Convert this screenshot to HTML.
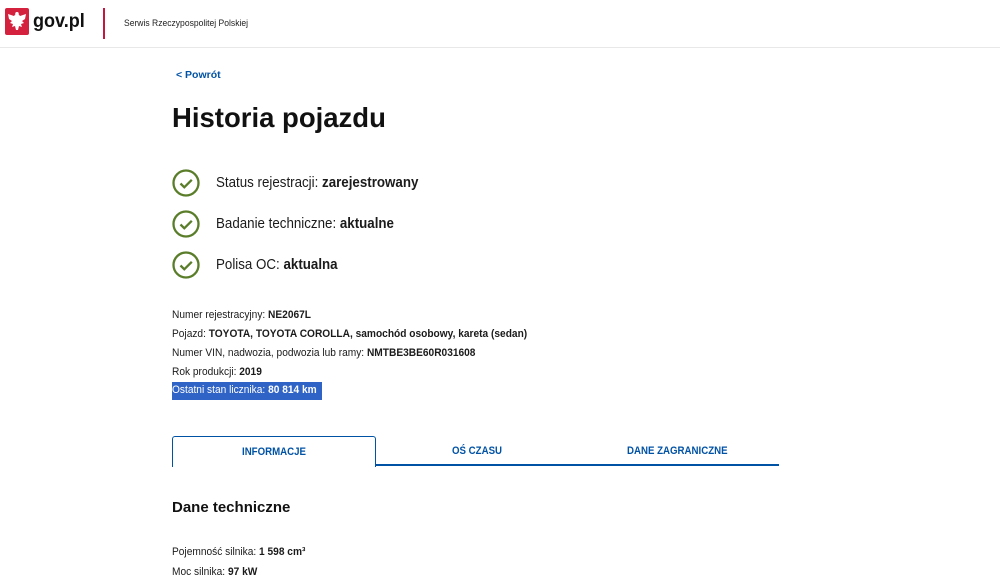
<!DOCTYPE html>
<html><head><meta charset="utf-8"><style>
*{margin:0;padding:0;box-sizing:border-box}
body{width:1000px;height:577px;overflow:hidden;background:#fff;font-family:"Liberation Sans",sans-serif;color:#1b1b1b;position:relative}
.abs{position:absolute;white-space:nowrap}
header{position:absolute;left:0;top:0;width:1000px;height:48px;border-bottom:1px solid #e8e8e8}
.info{font-size:11.3px;line-height:19px;transform:scaleX(0.9);transform-origin:0 0}
.st{font-size:14.5px;transform:scaleX(0.92);transform-origin:0 0}
.tab{font-size:11px;font-weight:bold;color:#0052a5;transform:scaleX(0.88);transform-origin:0 0}
</style></head><body>
<header>
<svg class="abs" style="left:5px;top:8px" width="24" height="27" viewBox="0 0 24 27">
<rect width="24" height="27" rx="2" fill="#d4213d"/>
<path d="M12 4c-1.5 0-2 1.2-1.6 2.2L9 8 3 6l1 5 3 2-2 2 3 1-1 3 3-1 1 4h2l1-4 3 1-1-3 3-1-2-2 3-2 1-5-6 2-1.4-1.8C14 5.2 13.5 4 12 4z" fill="#fff"/>
</svg>
<div class="abs" style="left:33px;top:11px;font-size:19px;font-weight:bold;color:#111;transform:scaleX(0.95);transform-origin:0 0">gov.pl</div>
<div class="abs" style="left:103px;top:8px;width:2px;height:31px;background:#c4163f"></div>
<div class="abs" style="left:124px;top:18px;font-size:9px;color:#222;transform:scaleX(0.95);transform-origin:0 0">Serwis Rzeczypospolitej Polskiej</div>
</header>
<div class="abs" style="left:176px;top:69px;font-size:10.5px;font-weight:bold;color:#0052a5">&lt; Powrót</div>
<div class="abs" style="left:172px;top:102px;font-size:27.5px;font-weight:bold;color:#111">Historia pojazdu</div>

<svg class="abs" style="left:172px;top:169px" width="28" height="28"><circle cx="14" cy="14" r="12.5" fill="none" stroke="#5a7d2a" stroke-width="2.3"/><path d="M8.5 14.5l3.8 3.8 7.5-7.5" fill="none" stroke="#5a7d2a" stroke-width="2.3"/></svg>
<div class="abs st" style="left:216px;top:175px">Status rejestracji: <b>zarejestrowany</b></div>
<svg class="abs" style="left:172px;top:210px" width="28" height="28"><circle cx="14" cy="14" r="12.5" fill="none" stroke="#5a7d2a" stroke-width="2.3"/><path d="M8.5 14.5l3.8 3.8 7.5-7.5" fill="none" stroke="#5a7d2a" stroke-width="2.3"/></svg>
<div class="abs st" style="left:216px;top:216px">Badanie techniczne: <b>aktualne</b></div>
<svg class="abs" style="left:172px;top:251px" width="28" height="28"><circle cx="14" cy="14" r="12.5" fill="none" stroke="#5a7d2a" stroke-width="2.3"/><path d="M8.5 14.5l3.8 3.8 7.5-7.5" fill="none" stroke="#5a7d2a" stroke-width="2.3"/></svg>
<div class="abs st" style="left:216px;top:257px">Polisa OC: <b>aktualna</b></div>

<div class="abs info" style="left:172px;top:306px">Numer rejestracyjny: <b>NE2067L</b></div>
<div class="abs info" style="left:172px;top:325px">Pojazd: <b>TOYOTA, TOYOTA COROLLA, samochód osobowy, kareta (sedan)</b></div>
<div class="abs info" style="left:172px;top:344px">Numer VIN, nadwozia, podwozia lub ramy: <b>NMTBE3BE60R031608</b></div>
<div class="abs info" style="left:172px;top:363px">Rok produkcji: <b>2019</b></div>
<div class="abs" style="left:172px;top:382px;background:#2f63c6;width:150px;height:18px"></div>
<div class="abs info" style="left:172px;top:381px;color:#fff">Ostatni stan licznika: <b>80 814 km</b></div>

<div class="abs" style="left:172px;top:436px;width:204px;height:31px;border:1.5px solid #0052a5;border-bottom:none;border-radius:3px 3px 0 0"></div>
<div class="abs" style="left:376px;top:464px;width:403px;height:2px;background:#0052a5"></div>
<div class="abs tab" style="left:242px;top:446px">INFORMACJE</div>
<div class="abs tab" style="left:452px;top:445px">OŚ CZASU</div>
<div class="abs tab" style="left:627px;top:445px">DANE ZAGRANICZNE</div>

<div class="abs" style="left:172px;top:499px;font-size:15px;font-weight:bold;color:#111">Dane techniczne</div>
<div class="abs info" style="left:172px;top:543px">Pojemność silnika: <b>1 598 cm³</b></div>
<div class="abs info" style="left:172px;top:563px">Moc silnika: <b>97 kW</b></div>
</body></html>
